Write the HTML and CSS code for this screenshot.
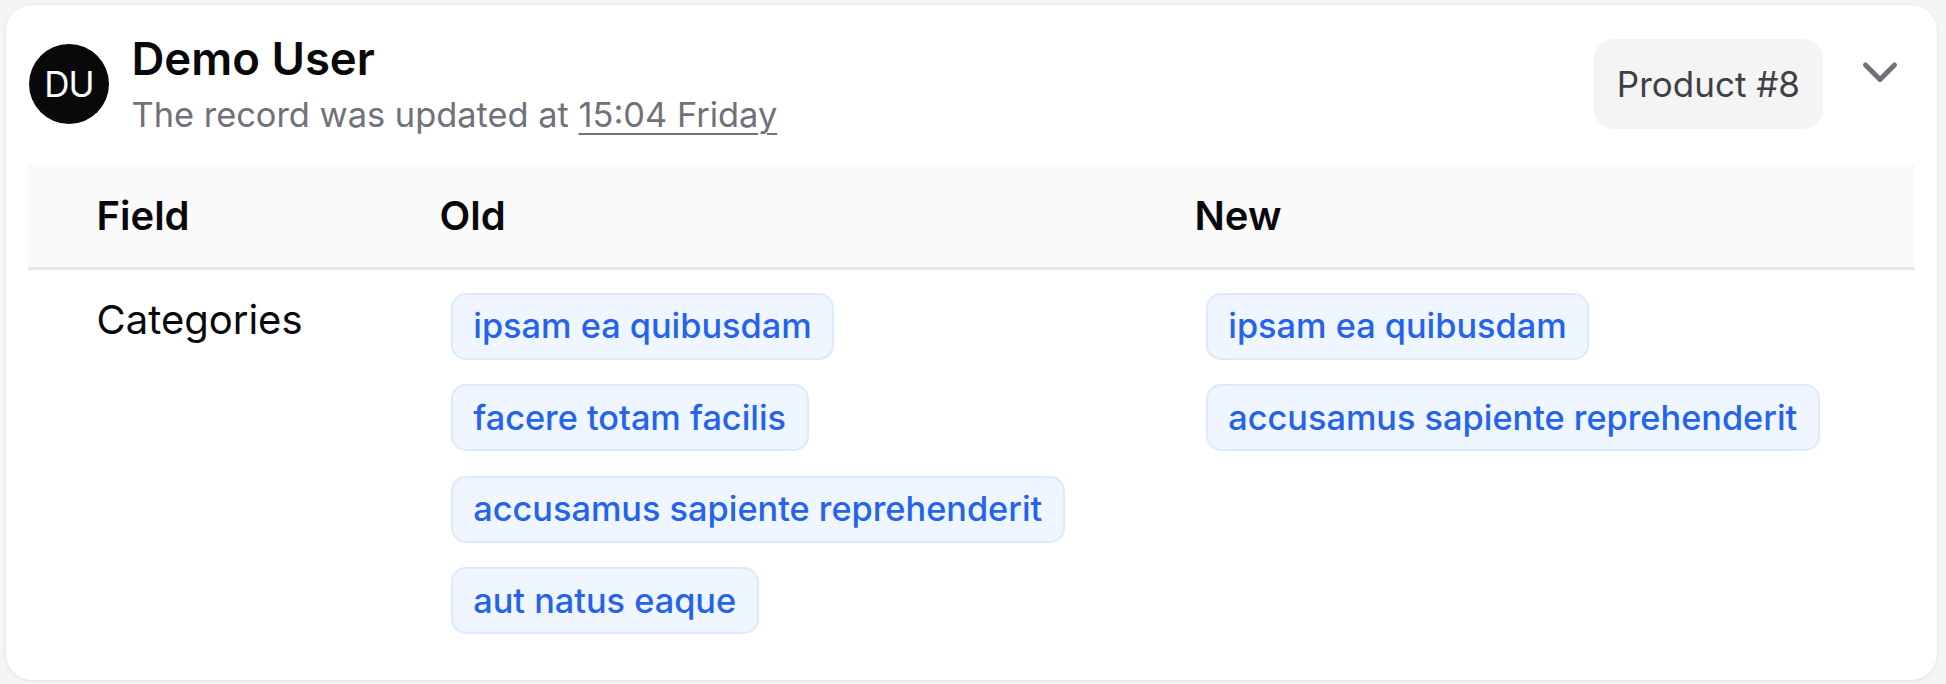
FILE: index.html
```html
<!DOCTYPE html>
<html lang="en">
<head>
<meta charset="utf-8">
<title>Record update</title>
<link rel="stylesheet" href="styles.css">
</head>
<body>
<div class="card">
  <div class="head">
    <div class="avatar">DU</div>
    <div class="who">
      <div class="name">Demo User</div>
      <div class="sub">The record was updated at <span class="time">15:04 Friday</span></div>
    </div>
    <div class="actions">
      <div class="badge">Product #8</div>
      <svg class="chev" width="50" height="50" viewBox="0 0 50 50" aria-hidden="true">
        <polyline points="10.5,17 25,31.5 39.5,17" fill="none" stroke="#71717a" stroke-width="5" stroke-linecap="round" stroke-linejoin="round"/>
      </svg>
    </div>
  </div>
  <div class="table">
    <div class="thead">
      <div class="th">Field</div>
      <div class="th">Old</div>
      <div class="th">New</div>
    </div>
    <div class="row">
      <div class="field">Categories</div>
      <div class="tags">
        <span class="tag">ipsam ea quibusdam</span>
        <span class="tag">facere totam facilis</span>
        <span class="tag">accusamus sapiente reprehenderit</span>
        <span class="tag">aut natus eaque</span>
      </div>
      <div class="tags">
        <span class="tag">ipsam ea quibusdam</span>
        <span class="tag">accusamus sapiente reprehenderit</span>
      </div>
    </div>
  </div>
</div>
</body>
</html>
```
FILE: styles.css
```css
html, body {
  margin: 0;
}
body {
  padding: 5px 9px 4px 6px;
  background: #f5f5f5;
  font-family: Inter, "Noto Sans", sans-serif;
  color: #09090b;
}
.card {
  box-sizing: border-box;
  height: 675px;
  background: #ffffff;
  border-radius: 26px;
  padding: 34px 22px 0 22px;
  box-shadow: 0 1px 4px rgba(0, 0, 0, 0.07), 0 0 0 1px rgba(0, 0, 0, 0.015);
}
.head {
  display: flex;
  align-items: center;
  height: 90px;
}
.avatar {
  flex: none;
  width: 80px;
  height: 80px;
  margin-left: 1px;
  border-radius: 50%;
  background: #09090b;
  color: #ffffff;
  display: flex;
  align-items: center;
  justify-content: center;
  font-size: 35px;
  letter-spacing: -1px;
}
.who {
  margin-left: 22.5px;
  display: flex;
  flex-direction: column;
}
.name {
  font-size: 45.5px;
  font-weight: 600;
  line-height: 62.5px;
  color: #09090b;
}
.sub {
  font-size: 34.4px;
  line-height: 50px;
  color: #71717a;
}
.time {
  text-decoration: underline;
  text-decoration-thickness: 2px;
  text-underline-offset: 6px;
}
.actions {
  margin-left: auto;
  align-self: stretch;
  display: flex;
  align-items: flex-start;
  gap: 32px;
}
.badge {
  background: #f4f4f5;
  border-radius: 20px;
  padding: 20px 23px;
  font-size: 35px;
  line-height: 50px;
  color: #3f3f46;
}
.chev {
  flex: none;
  margin-top: 8.5px;
  margin-right: 10px;
}
.table {
  margin-top: 35px;
}
.thead,
.row {
  display: grid;
  grid-template-columns: 343px 755px 1fr;
}
.thead {
  height: 103px;
  align-items: center;
  background: #fafafa;
  border-bottom: 3px solid #e5e7eb;
}
.th {
  padding-left: 68.5px;
  font-size: 40px;
  font-weight: 600;
  line-height: 60px;
}
.field {
  padding: 20px 0 0 68.5px;
  font-size: 40px;
  line-height: 60px;
}
.tags {
  padding: 10.5px 0 0 67.5px;
  display: flex;
  flex-direction: column;
  align-items: flex-start;
}
.tag {
  margin: 12.25px;
  padding: 6.5px 20.5px;
  border: 2px solid #dbeafe;
  border-radius: 15px;
  background: #eff6ff;
  color: #2563eb;
  font-size: 34.3px;
  line-height: 50px;
  font-weight: 500;
}
```
